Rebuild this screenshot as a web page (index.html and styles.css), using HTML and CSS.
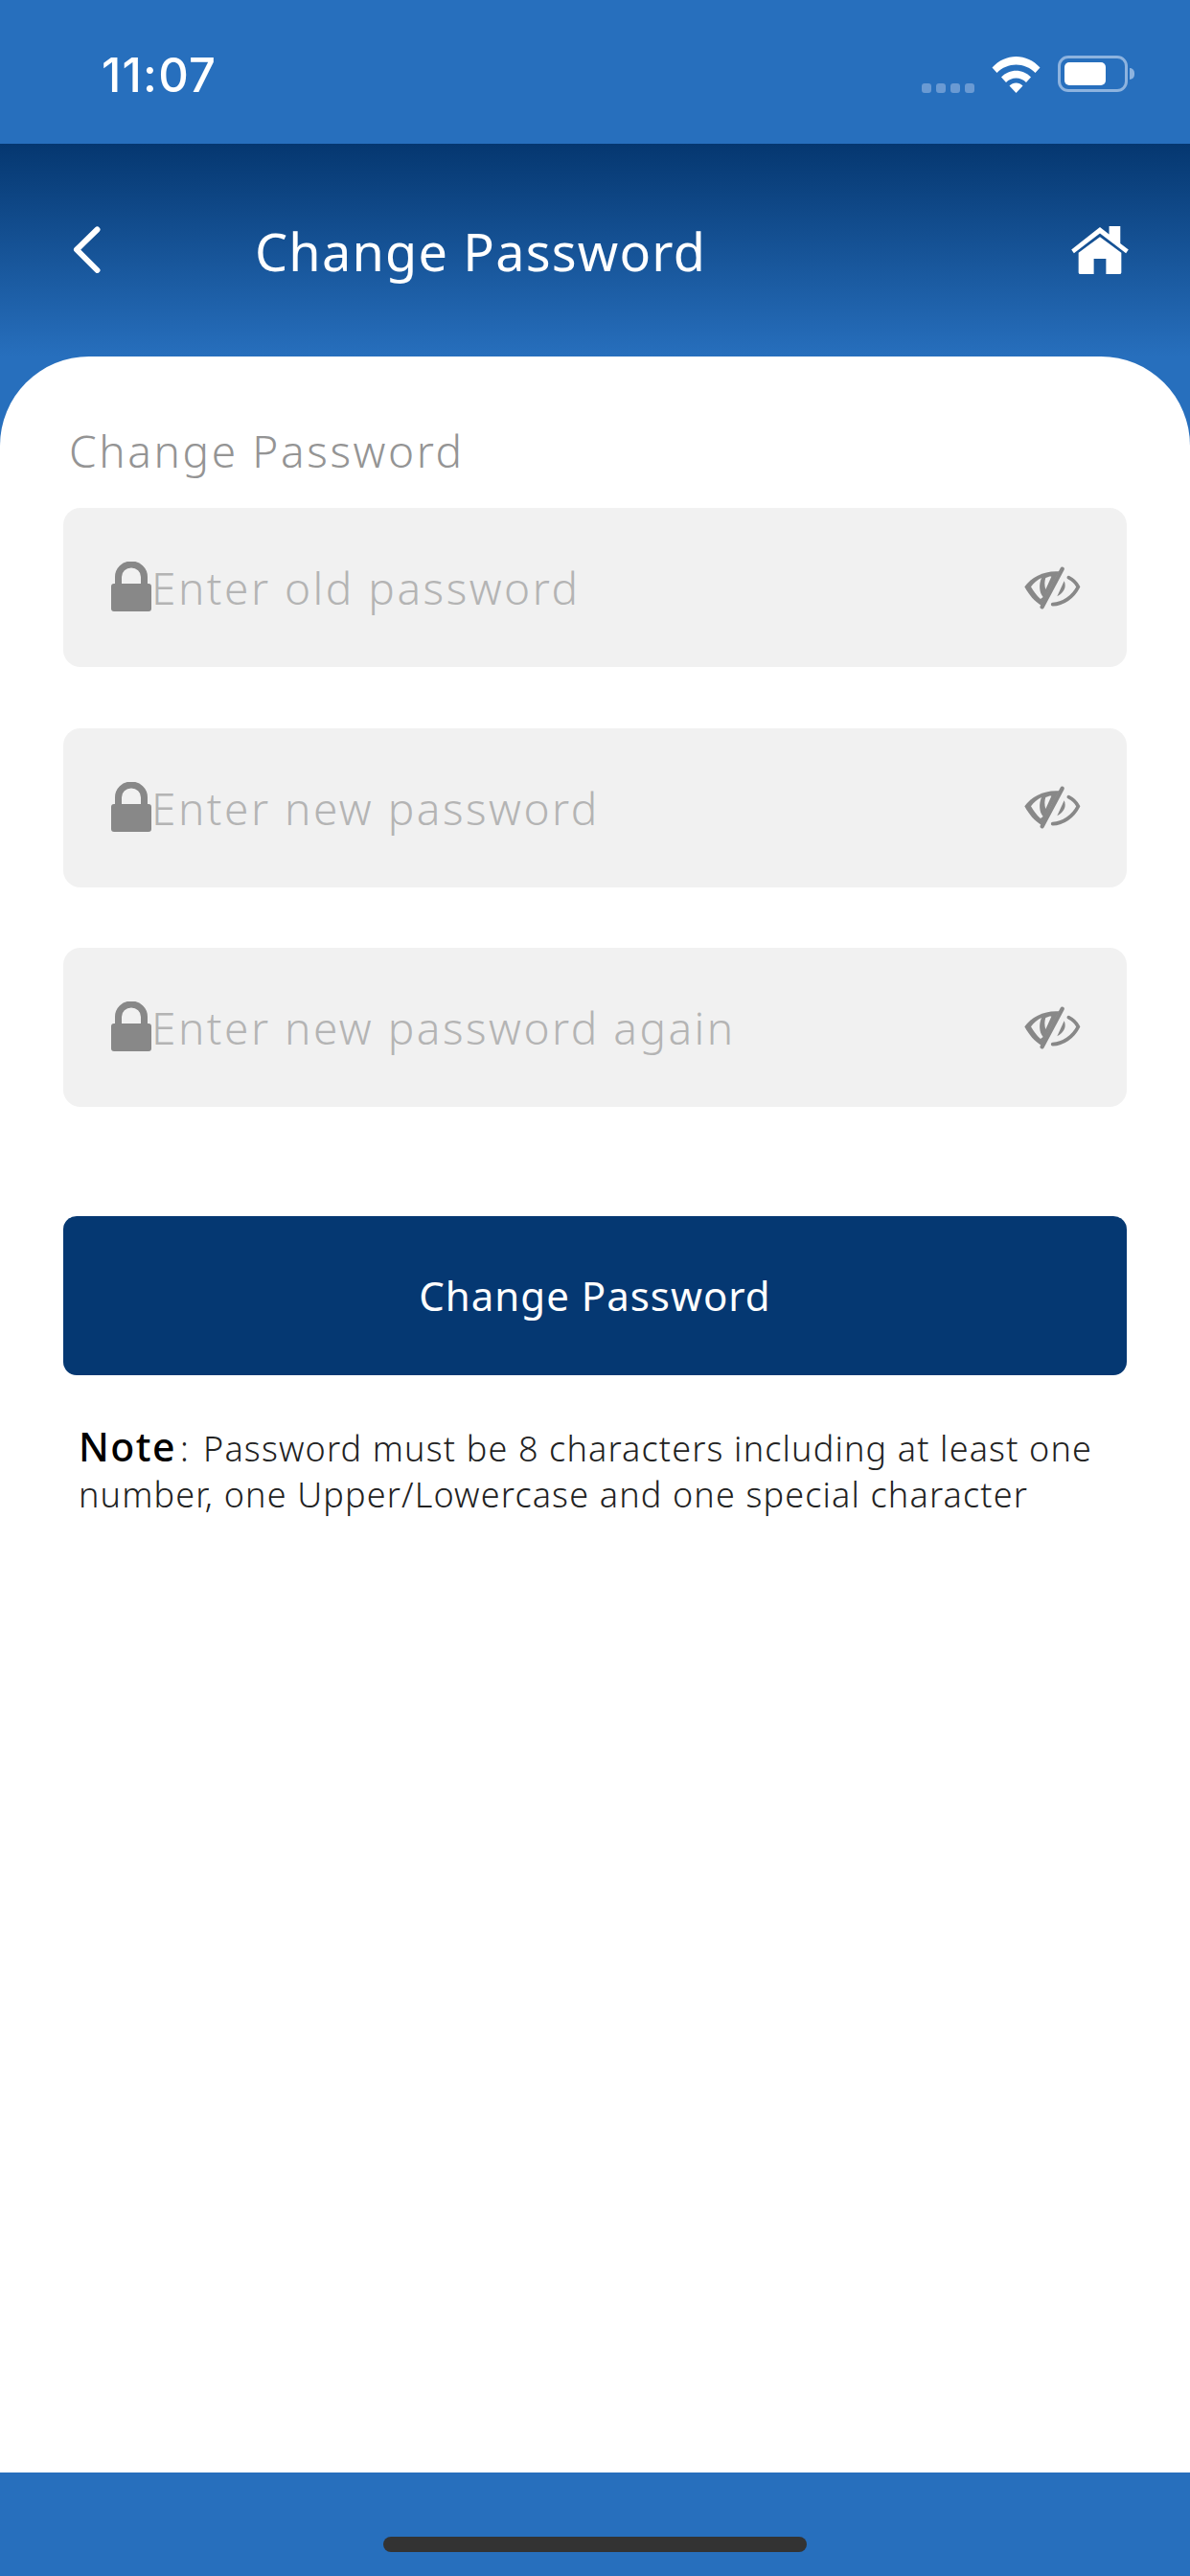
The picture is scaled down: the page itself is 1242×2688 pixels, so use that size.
FILE: index.html
```html
<!DOCTYPE html>
<html lang="en">
<head>
<meta charset="utf-8">
<title>Change Password</title>
<link rel="stylesheet" href="styles.css">
</head>
<body>
<div class="app">
  <div class="status">
    <span class="time">11:07</span>
    <div class="status-icons">
      <div class="dots"><i></i><i></i><i></i><i></i></div>
      <svg class="wifi" viewBox="0 0 51 39"><path d="M0.500 12.500C14 -3 37 -3 50.500 12.500L45.500 18C34.500 6.500 16.500 6.500 5.500 18Z" fill="#fff"/><path d="M10 22.500C18.500 13.500 32.500 13.500 41 22.500L36 28C30.500 22 20.500 22 15 28Z" fill="#fff"/><path d="M18.500 31.500C22.500 27.500 28.500 27.500 32.500 31.500L25.500 39Z" fill="#fff"/></svg>
      <div class="battery"><div class="battery-shell"><div class="battery-fill"></div></div><div class="battery-tip"></div></div>
    </div>
  </div>
  <header class="topbar">
    <svg class="back" viewBox="0 0 29 49"><path d="M25.500 3.500L4 24.500L25.500 46" fill="none" stroke="#fff" stroke-width="6" stroke-linecap="round" stroke-linejoin="round"/></svg>
    <h1 class="title">Change Password</h1>
    <svg class="home" viewBox="2 2 56 47"><path d="M2 25L30 3L39 10V2H50V19L58 25L55.500 28.500L30 9L4.500 28.500Z" fill="#fff"/><path d="M9 28L30 12.500L51 28V47.500Q51 49 49 49H36V34H24V49H11Q9 49 9 47.500Z" fill="#fff"/></svg>
  </header>
  <main class="card">
    <p class="label">Change Password</p>
    <div class="fields">
      <div class="field">
        <svg class="lock" viewBox="0 0 42 52"><path d="M7.500 26V16A13.500 13 0 0 1 34.500 16V26" fill="none" stroke="#888" stroke-width="7"/><rect y="23" width="42" height="29" rx="3" fill="#888"/></svg>
        <span class="placeholder">Enter old password</span>
        <svg class="eye" viewBox="80 65 180 140"><use href="#eye-shape"/></svg>
      </div>
      <div class="field">
        <svg class="lock" viewBox="0 0 42 52"><path d="M7.500 26V16A13.500 13 0 0 1 34.500 16V26" fill="none" stroke="#888" stroke-width="7"/><rect y="23" width="42" height="29" rx="3" fill="#888"/></svg>
        <span class="placeholder">Enter new password</span>
        <svg class="eye" viewBox="80 65 180 140"><use href="#eye-shape"/></svg>
      </div>
      <div class="field">
        <svg class="lock" viewBox="0 0 42 52"><path d="M7.500 26V16A13.500 13 0 0 1 34.500 16V26" fill="none" stroke="#888" stroke-width="7"/><rect y="23" width="42" height="29" rx="3" fill="#888"/></svg>
        <span class="placeholder">Enter new password again</span>
        <svg class="eye" viewBox="80 65 180 140"><use href="#eye-shape"/></svg>
      </div>
    </div>
    <button class="submit" type="button">Change Password</button>
    <p class="note"><strong class="note-key">Note</strong><span class="note-colon">:</span>Password must be 8 characters including at least one number, one Upper/Lowercase and one special character</p>
  </main>
  <footer class="bottom"><div class="home-indicator"></div></footer>
</div>
<svg class="defs" width="0" height="0">
  <defs>
    <g id="eye-shape">
      <path d="M84 132C105 100 150 80 192 84L136 190C115 178 98 158 84 132Z" fill="#888"/>
      <path d="M104 132C112 120 124 110 137 104C128 125 130 150 142 164L134 170C122 160 112 146 104 132Z" fill="#f1f1f1"/>
      <path d="M150 104C158 100 166 98 168 100L150 140C146 128 146 114 150 104Z" fill="#f1f1f1"/>
      <path d="M202 76L139 195" fill="none" stroke="#888" stroke-width="13" stroke-linecap="round"/>
      <path d="M222 103C236 110 246 120 252 132C236 164 204 186 172 187" fill="none" stroke="#888" stroke-width="11" stroke-linecap="round"/>
      <path d="M208 114C216 132 208 150 186 162Z" fill="#888"/>
    </g>
  </defs>
</svg>
</body>
</html>
```
FILE: styles.css
```css
* { box-sizing: border-box; }
html, body { margin: 0; padding: 0; }
body { width: 1242px; height: 2688px; overflow: hidden; background: #276fbd; font-family: "Noto Sans", "DejaVu Sans", sans-serif; }
.app { width: 1242px; height: 2688px; display: flex; flex-direction: column; background: #276fbd; }
.defs { display: block; height: 0; }

.status { height: 150px; flex: none; display: flex; align-items: flex-start; justify-content: space-between; padding: 50px 58px 0 106px; background: #276fbd; }
.time { font-family: Inter, sans-serif; font-size: 49px; line-height: 58px; font-weight: 500; color: #fff; letter-spacing: 1.200px; }
.status-icons { display: flex; align-items: flex-start; padding-top: 8px; }
.dots { display: flex; gap: 5px; margin-top: 29px; margin-right: 18px; }
.dots i { width: 10px; height: 10px; border-radius: 3px; background: #6a9ad3; display: block; }
.wifi { width: 51px; height: 39px; margin-right: 18px; display: block; }
.battery { display: flex; align-items: center; }
.battery-shell { width: 73px; height: 38px; border: 3px solid #8db3df; border-radius: 11px; padding: 4px; }
.battery-fill { width: 43px; height: 24px; background: #fff; border-radius: 5px; }
.battery-tip { width: 5px; height: 12px; margin-left: 2px; background: #8db3df; border-radius: 0 6px 6px 0; }

.topbar { height: 222px; flex: none; display: flex; align-items: flex-start; padding: 86px 64px 0 76px; background: linear-gradient(180deg, #053770 0%, #276fbd 100%); }
.back { width: 29px; height: 49px; flex: none; display: block; }
.title { margin: -14px auto 0 161px; font-size: 54px; line-height: 80px; font-weight: 400; color: #fff; letter-spacing: 1.200px; white-space: nowrap; }
.home { width: 60px; height: 50px; flex: none; display: block; }

.card { flex: 1; background: #fff; border-radius: 93px 93px 0 0; padding: 61px 66px 0; display: flex; flex-direction: column; }
.label { margin: 0 0 23px 6px; font-size: 46px; line-height: 74px; color: #949494; letter-spacing: 2.600px; font-weight: 300; }
.fields { display: flex; flex-direction: column; gap: 63.500px; }
.field { height: 166px; background: #f1f1f1; border-radius: 18px; display: flex; align-items: center; padding: 0 48px 0 50px; }
.lock { width: 42px; height: 52px; flex: none; display: block; margin-top: -2px; }
.placeholder { flex: 1; font-size: 46px; font-weight: 300; color: #b4b4b4; letter-spacing: 2.500px; white-space: nowrap; }
.eye { width: 60px; height: 46.670px; flex: none; display: block; }

.submit { margin-top: 114px; height: 166px; border: 0; border-radius: 14px; background: #053872; color: #fff; font-family: inherit; font-size: 42px; letter-spacing: 1px; font-weight: 400; width: 100%; padding-bottom: 3px; }
.note { margin: 50px 0 0 16px; width: 1090px; font-size: 36px; line-height: 48px; color: #222; font-weight: 300; letter-spacing: 1.150px; }
.note-key { font-size: 41px; font-weight: 500; color: #000; letter-spacing: 1.500px; }
.note-colon { margin: 0 14px 0 4px; }

.bottom { height: 108px; flex: none; background: #276fbd; display: flex; justify-content: center; padding-top: 67px; }
.home-indicator { width: 442px; height: 16px; border-radius: 8px; background: #333; }
```
